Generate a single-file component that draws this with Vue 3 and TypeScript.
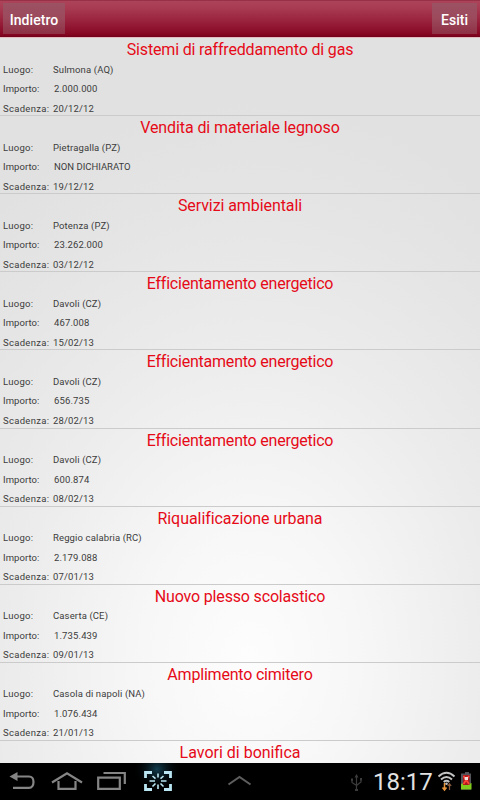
<script setup lang="ts">
interface Tender {
  title: string
  tracking: number
  place: string
  amount: string
  due: string
}

const tenders: Tender[] = [
  { title: 'Sistemi di raffreddamento di gas', tracking: -0.17, place: 'Sulmona (AQ)', amount: '2.000.000', due: '20/12/12' },
  { title: 'Vendita di materiale legnoso', tracking: -0.1, place: 'Pietragalla (PZ)', amount: 'NON DICHIARATO', due: '19/12/12' },
  { title: 'Servizi ambientali', tracking: -0.08, place: 'Potenza (PZ)', amount: '23.262.000', due: '03/12/12' },
  { title: 'Efficientamento energetico', tracking: -0.22, place: 'Davoli (CZ)', amount: '467.008', due: '15/02/13' },
  { title: 'Efficientamento energetico', tracking: -0.22, place: 'Davoli (CZ)', amount: '656.735', due: '28/02/13' },
  { title: 'Efficientamento energetico', tracking: -0.22, place: 'Davoli (CZ)', amount: '600.874', due: '08/02/13' },
  { title: 'Riqualificazione urbana', tracking: -0.06, place: 'Reggio calabria (RC)', amount: '2.179.088', due: '07/01/13' },
  { title: 'Nuovo plesso scolastico', tracking: -0.17, place: 'Caserta (CE)', amount: '1.735.439', due: '09/01/13' },
  { title: 'Amplimento cimitero', tracking: -0.2, place: 'Casola di napoli (NA)', amount: '1.076.434', due: '21/01/13' },
]
const nextTitle = 'Lavori di bonifica'
</script>

<template>
  <div class="screen">
    <header class="bar">
      <button class="btn back">Indietro</button>
      <button class="btn results">Esiti</button>
    </header>

    <main class="list">
      <section v-for="(t, i) in tenders" :key="i" class="item">
        <h2 class="title" :style="{ letterSpacing: t.tracking + 'px' }">{{ t.title }}</h2>
        <dl class="rows">
          <div class="row"><dt>Luogo:</dt><dd>{{ t.place }}</dd></div>
          <div class="row"><dt class="tight">Importo:</dt><dd class="amount" :class="{ words: t.amount.startsWith('N') }">{{ t.amount }}</dd></div>
          <div class="row"><dt>Scadenza:</dt><dd>{{ t.due }}</dd></div>
        </dl>
      </section>
      <section class="item">
        <h2 class="title">{{ nextTitle }}</h2>
      </section>
    </main>

    <footer class="nav">
      <svg class="keys" width="260" height="37" viewBox="0 0 260 37" fill="none">
        <defs>
          <radialGradient id="glow">
            <stop offset="0" stop-color="#123e50" />
            <stop offset="1" stop-color="#000" stop-opacity="0" />
          </radialGradient>
        </defs>
        <ellipse cx="157" cy="6" rx="24" ry="22" fill="url(#glow)" />
        <g stroke="#858585" stroke-width="2.2">
          <path d="M16 13.5H29C32 13.5 33.500 16 33.500 19C33.500 22 32 24.800 29 24.800H13" />
          <path d="M9.500 13.500L17.500 9V18Z" fill="#858585" stroke="none" />
          <path d="M52 19.500L67 10.200L82 19.500M58.500 18V25.800H75.500V18" />
          <path d="M98.200 14.600H119.800V25.800H98.200Z" />
          <path d="M103.500 10H124.800V21" />
        </g>
        <g stroke="#b9e6f2" stroke-width="2.8">
          <path d="M145.500 15V9.500H152M164 9.500H170.500V15M170.500 21V26.500H164M152 26.500H145.500V21" />
          <path stroke-width="1.600" d="M158 10.500V14.500M158 21.500V26M149.500 18H155M161 18H166.500M152.500 13L155.500 15.700M163.500 13L160.500 15.700M152.500 23.500L155.500 20.500M163.500 23.500L160.500 20.500" />
        </g>
        <path d="M228.500 21.500L239.500 14L250.500 21.500" stroke="#5e5e5e" stroke-width="2" />
      </svg>
      <div class="status">
        <svg width="13" height="37" viewBox="0 0 13 37" fill="none" stroke="#3c3c3c" stroke-width="1.200">
          <path d="M5.500 13V27M1 16.500V19.500L5.500 22.500L10 19V16.500" />
          <path d="M5.500 11L3.500 14.500H7.500ZM4 26H7V28H4ZM0 15.500H2V18H0ZM9 15H11V17.500H9Z" fill="#3c3c3c" stroke="none" />
        </svg>
        <span class="clock">18:17</span>
        <svg class="signal" width="36" height="37" viewBox="0 0 36 37" fill="none">
          <g stroke="#c4c4c4" stroke-width="1.900">
            <path d="M1.500 13.500Q9.500 6 17.500 13.500" />
            <path d="M4 16.500Q9.500 11.300 15 16.500" />
            <path d="M6.700 19Q9.500 16.600 12.300 19" />
          </g>
          <circle cx="9.500" cy="20.700" r="1.300" fill="#c4c4c4" />
          <path d="M7.500 20V26.500M5.500 24.500L7.500 27L9.500 24.500" stroke="#e8963c" stroke-width="1.500" />
          <path d="M12.500 27V21M10.800 23L12.500 20.800L14.200 23" stroke="#8c5c3c" stroke-width="1.200" />
          <path d="M26 10.500H28V9H32V10.500H34V26.500H24V10.500Z" fill="#54545a" />
          <path d="M24 21L27 20L30 22L34.500 20V26.500H24Z" fill="#82c91e" />
          <path d="M26 12H32.500V22H26Z" fill="#a8181c" />
          <path d="M26.500 13L32 21M32 13L26.500 21" stroke="#ff4438" stroke-width="1.800" />
          <path d="M27.700 14H31V17H27.700Z" fill="#f4dfdc" />
        </svg>
      </div>
    </footer>
  </div>
</template>

<style>
body {
  margin: 0;
  background: #000;
}
</style>

<style scoped>
.screen {
  width: 480px;
  height: 800px;
  display: flex;
  flex-direction: column;
  overflow: hidden;
  font-family: Roboto, sans-serif;
}
.bar {
  box-sizing: border-box;
  flex: 0 0 38px;
  display: flex;
  justify-content: space-between;
  align-items: flex-start;
  padding: 3px 3px 0;
  border-bottom: 1px solid #e3bcc3;
  background: linear-gradient(#8c2940 0, #ac4359 1.500px, #a83b52 8px, #98203b 22px, #870723 34px, #73001a 37px);
}
.btn {
  height: 31px;
  padding: 0;
  border: 0;
  background: linear-gradient(#9b5263, #9c495c 50%, #8e3046);
  color: #fff;
  font: 500 14px/33px Roboto, sans-serif;
  text-align: center;
}
.back {
  width: 62px;
  padding-top: 1px;
  letter-spacing: 0.080px;
}
.results {
  width: 45px;
  padding-top: 1px;
}
.list {
  flex: 1 1 0;
  min-height: 0;
  overflow: hidden;
  background: radial-gradient(ellipse 430px 560px at 250px 620px, #fdfdfd 0, #f7f7f7 25%, #ececec 55%, #e5e5e5 80%, #e1e1e1 100%);
}
.item {
  box-sizing: border-box;
  height: 78.120px;
  border-bottom: 1px solid #cbcbcb;
}
.title {
  margin: 0;
  padding-top: 1px;
  height: 20.500px;
  font-size: 16px;
  font-weight: 400;
  line-height: 22px;
  text-align: center;
  color: #e60a18;
}
.rows {
  margin: 0;
}
.row {
  display: flex;
  height: 19.500px;
  padding-left: 3px;
  font-size: 9.500px;
  line-height: 19.500px;
  letter-spacing: 0.130px;
  color: #3c3c3c;
  white-space: nowrap;
}
dt {
  flex: 0 0 50px;
  letter-spacing: 0.300px;
}
.tight {
  letter-spacing: 0.080px;
}
dd {
  margin: 0;
}
.amount {
  padding-left: 1px;
}
.words {
  letter-spacing: 0;
}
.nav {
  flex: 0 0 37px;
  display: flex;
  justify-content: space-between;
  background: #000;
}
.status {
  display: flex;
  height: 37px;
  padding-right: 7px;
}
.clock {
  width: 60px;
  margin-left: 9px;
  color: #e2e2e2;
  font-size: 24px;
  line-height: 38px;
}
.signal {
  margin-left: 4px;
}
</style>
